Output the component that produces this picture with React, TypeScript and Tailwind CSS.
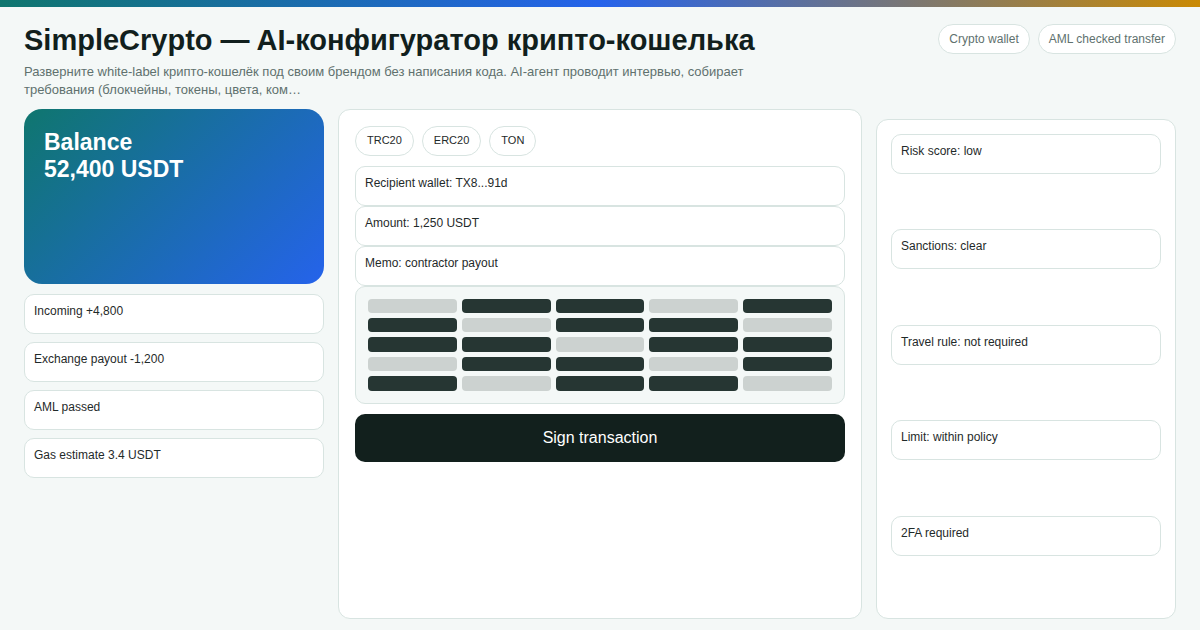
const feedItems = ["Incoming +4,800", "Exchange payout -1,200", "AML passed", "Gas estimate 3.4 USDT"];
const networks = ["TRC20", "ERC20", "TON"];
const fields = ["Recipient wallet: TX8...91d", "Amount: 1,250 USDT", "Memo: contractor payout"];
const checks = ["Risk score: low", "Sanctions: clear", "Travel rule: not required", "Limit: within policy", "2FA required"];

// 1 = dark cell, 0 = light cell
const cells = [
  0, 1, 1, 0, 1,
  1, 0, 1, 1, 0,
  1, 1, 0, 1, 1,
  0, 1, 1, 0, 1,
  1, 0, 1, 1, 0,
];

function Row({ label }: { label: string }) {
  return (
    <div className="h-10 rounded-[10px] border border-[#d8e4e1] bg-white px-[9px] py-[9px] text-xs leading-[14px] text-[#1f2a2a]">
      {label}
    </div>
  );
}

export default function App() {
  return (
    <div className="flex h-[630px] w-[1200px] flex-col overflow-hidden bg-[#f4f8f7] font-['Liberation_Sans',Arial,sans-serif] text-[#111f1d]">
      <div className="h-[7px] shrink-0 bg-[linear-gradient(90deg,#0f766e,#2563eb,#ca8a04)]" />

      <div className="flex flex-1 flex-col px-6 pb-[11.4px] pt-[17px]">
        <header className="flex h-[84.6px] shrink-0 items-start justify-between">
          <div className="w-[760px]">
            <h1 className="text-[29px] font-bold leading-[32px]">
              SimpleCrypto — AI-конфигуратор крипто-кошелька
            </h1>
            <p className="mt-[7px] w-[760px] text-[13px] leading-[18px] text-[#60716e]">
              Разверните white-label крипто-кошелёк под своим брендом без написания кода. AI-агент проводит интервью, собирает требования (блокчейны, токены, цвета, ком…
            </p>
          </div>
          <div className="flex gap-2">
            <span className="flex h-[30px] items-center rounded-full border border-[#d8e4e1] bg-white px-[10px] text-xs text-[#60716e]">
              Crypto wallet
            </span>
            <span className="flex h-[30px] items-center rounded-full border border-[#d8e4e1] bg-white px-[10px] text-xs text-[#60716e]">
              AML checked transfer
            </span>
          </div>
        </header>

        <main className="grid min-h-0 flex-1 grid-cols-[300px_524px_300px] gap-[14px]">
          <section className="flex flex-col gap-2">
            <div className="mb-0.5 h-[175px] rounded-[18px] bg-[linear-gradient(135deg,#0f766e,#2563eb)] px-5 py-[20px] text-[23px] font-bold leading-[27px] text-white">
              <div>Balance</div>
              <div>52,400 USDT</div>
            </div>
            {feedItems.map((item) => (
              <Row key={item} label={item} />
            ))}
          </section>

          <section className="flex flex-col rounded-xl border border-[#d8e4e1] bg-white p-4">
            <div className="mb-[10px] flex gap-2">
              {networks.map((n) => (
                <span key={n} className="flex h-[30px] items-center rounded-full border border-[#d8e4e1] bg-white px-[11px] text-[11px] text-[#1f2a2a]">
                  {n}
                </span>
              ))}
            </div>
            {fields.map((f) => (
              <Row key={f} label={f} />
            ))}
            <div className="grid h-[118px] grid-cols-5 grid-rows-5 gap-[5px] rounded-[10px] border border-[#d8e4e1] bg-[#f4f8f7] p-3">
              {cells.map((c, i) => (
                <div key={i} className={c ? "rounded bg-[#263633]" : "rounded bg-[#ccd2d0]"} />
              ))}
            </div>
            <button className="mt-[10px] h-12 rounded-[10px] bg-[#12201d] text-base text-white">
              Sign transaction
            </button>
          </section>

          <section className="mt-[10px] grid grid-rows-5 items-start gap-2 rounded-xl border border-[#d8e4e1] bg-white px-[14px] pb-[14.5px] pt-[14px]">
            {checks.map((c) => (
              <Row key={c} label={c} />
            ))}
          </section>
        </main>
      </div>
    </div>
  );
}
